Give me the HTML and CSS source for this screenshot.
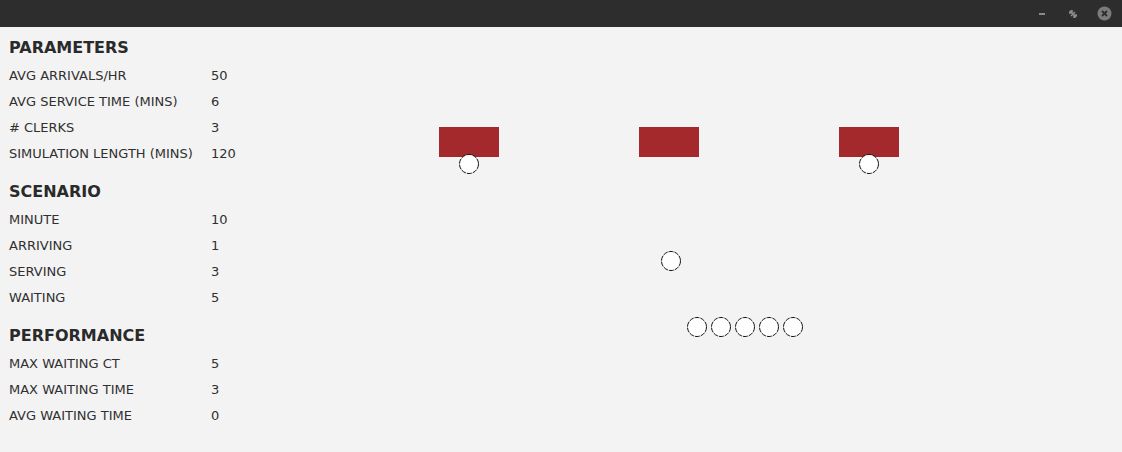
FILE: index.html
```html
<!DOCTYPE html>
<html>
<head>
<meta charset="utf-8">
<link rel="stylesheet" href="styles.css">
</head>
<body>
<div class="titlebar">
  <div class="controls">
    <span class="ctl-min"></span>
    <svg class="ctl-restore" width="8" height="8" viewBox="0 0 8 8"><path d="M0 3 L3 0 L3 3 Z M5 8 L8 5 L5 5 Z M2 6 L6 2" fill="#8a8a8a" stroke="#8a8a8a" stroke-width="1.6"/></svg>
    <svg class="ctl-close" width="15" height="15" viewBox="0 0 15 15"><circle cx="7.5" cy="7.5" r="7" fill="#7b7b7b"/><path d="M5 5 L10 10 M10 5 L5 10" stroke="#2d2d2d" stroke-width="1.8"/></svg>
  </div>
</div>
<div class="main">
  <div class="panel">
    <div class="section">
      <div class="heading">PARAMETERS</div>
      <div class="row"><span class="label">AVG ARRIVALS/HR</span><span class="value">50</span></div>
      <div class="row"><span class="label">AVG SERVICE TIME (MINS)</span><span class="value">6</span></div>
      <div class="row"><span class="label"># CLERKS</span><span class="value">3</span></div>
      <div class="row"><span class="label">SIMULATION LENGTH (MINS)</span><span class="value">120</span></div>
    </div>
    <div class="section">
      <div class="heading">SCENARIO</div>
      <div class="row"><span class="label">MINUTE</span><span class="value">10</span></div>
      <div class="row"><span class="label">ARRIVING</span><span class="value">1</span></div>
      <div class="row"><span class="label">SERVING</span><span class="value">3</span></div>
      <div class="row"><span class="label">WAITING</span><span class="value">5</span></div>
    </div>
    <div class="section">
      <div class="heading">PERFORMANCE</div>
      <div class="row"><span class="label">MAX WAITING CT</span><span class="value">5</span></div>
      <div class="row"><span class="label">MAX WAITING TIME</span><span class="value">3</span></div>
      <div class="row"><span class="label">AVG WAITING TIME</span><span class="value">0</span></div>
    </div>
  </div>
  <svg class="canvas" viewBox="300 27 822 425" width="822" height="425">
    <rect x="439" y="127" width="60" height="30" fill="#a3292c"/>
    <rect x="639" y="127" width="60" height="30" fill="#a3292c"/>
    <rect x="839" y="127" width="60" height="30" fill="#a3292c"/>
    <g fill="#ffffff" stroke="#111" stroke-width="1" stroke-dasharray="5 1">
      <circle cx="469" cy="164" r="9.5"/>
      <circle cx="869" cy="164" r="9.5"/>
      <circle cx="671" cy="261" r="9.5"/>
      <circle cx="697" cy="327" r="9.5"/>
      <circle cx="721" cy="327" r="9.5"/>
      <circle cx="745" cy="327" r="9.5"/>
      <circle cx="769" cy="327" r="9.5"/>
      <circle cx="793" cy="327" r="9.5"/>
    </g>
  </svg>
</div>
</body>
</html>
```

FILE: styles.css
```css
html, body {
  margin: 0;
  padding: 0;
  background: #f3f3f3;
  font-family: "DejaVu Sans", Verdana, sans-serif;
  color: #2b2b2b;
  width: 1122px;
  height: 452px;
  overflow: hidden;
}

.titlebar {
  height: 27px;
  background: #2d2d2d;
  display: flex;
  justify-content: flex-end;
  align-items: center;
}

.controls {
  display: flex;
  align-items: center;
  padding-right: 10px;
}

.ctl-min {
  display: block;
  width: 6px;
  height: 2px;
  background: #8a8a8a;
  margin-right: 24px;
}

.ctl-restore {
  display: block;
  margin-right: 20px;
}

.ctl-close {
  display: block;
}

.main {
  display: flex;
  height: 425px;
}

.panel {
  width: 291px;
  padding-left: 9px;
  padding-top: 11px;
  flex: none;
}

.section + .section {
  margin-top: 15px;
}

.heading {
  font-size: 16px;
  font-weight: bold;
  line-height: 20px;
  margin-bottom: 5px;
  color: #2a2a2a;
}

.row {
  display: grid;
  grid-template-columns: 202px auto;
  font-size: 13px;
  line-height: 26px;
  white-space: nowrap;
  color: #303030;
}

.canvas {
  display: block;
  flex: none;
}
```
